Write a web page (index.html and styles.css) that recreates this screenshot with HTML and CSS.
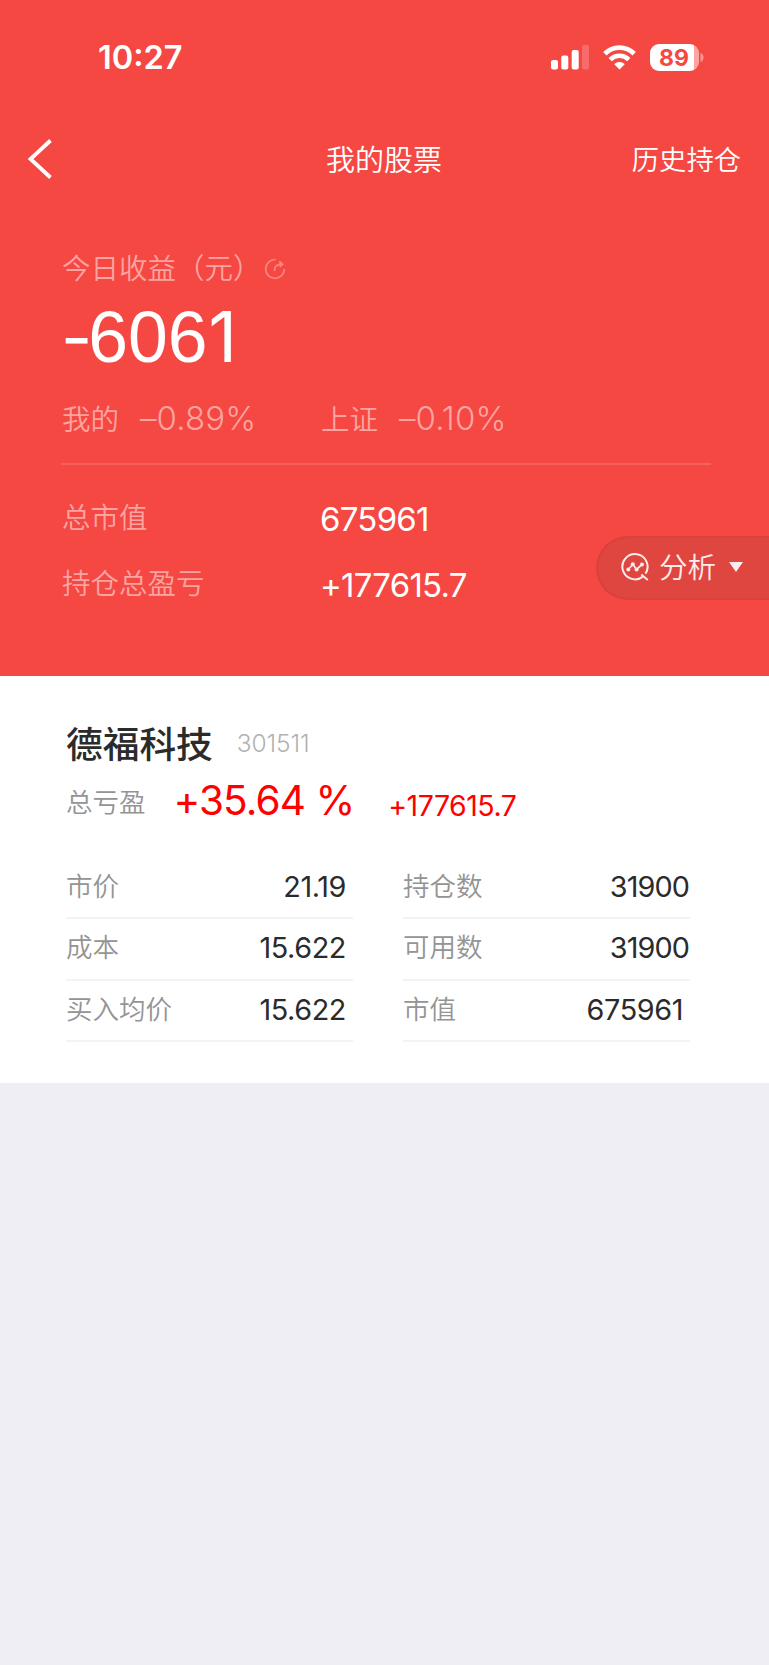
FILE: index.html
```
<!DOCTYPE html>
<html lang="zh-CN">
<head>
  <meta charset="UTF-8">
  <title>我的股票</title>
  <link rel="stylesheet" href="styles.css">
</head>
<body>
  <div class="top">
    <!-- Status bar -->
    <div class="status-bar">
      <span class="time">10:27</span>
      <div class="status-icons">
        <svg class="signal" width="38" height="25" viewBox="0 0 38 25" fill="#fff">
          <rect x="0" y="15" width="7" height="9.5" rx="2"/>
          <rect x="10.3" y="10.5" width="7" height="14" rx="2"/>
          <rect x="20.7" y="5" width="7" height="19.5" rx="2"/>
          <rect x="31" y="0" width="7" height="24.5" rx="2" opacity="0.2"/>
        </svg>
        <svg class="wifi" width="33" height="25" viewBox="0 0 33 25">
          <path d="M1.8 8.8C10 0.6 23 0.6 31.2 8.8" fill="none" stroke="#fff" stroke-width="4.8"/>
          <path d="M7.2 14.6C12.5 9.5 20.5 9.5 25.8 14.6" fill="none" stroke="#fff" stroke-width="4.6"/>
          <path d="M11.3 19.2C14 16.2 19 16.2 21.7 19.2L16.5 24.5Z" fill="#fff"/>
        </svg>
        <div class="battery">
          <span class="battery-level">89</span>
          <svg class="battery-cap" width="4" height="9" viewBox="0 0 4 9"><path d="M0.5 0C4.5 1.5 4.5 7.5 0.5 9Z" fill="#fff" opacity="0.45"/></svg>
        </div>
      </div>
    </div>

    <!-- Nav bar -->
    <div class="nav-bar">
      <svg class="back" width="26" height="42" viewBox="0 0 26 42">
        <path d="M23.5 2.5L3.5 21L23.5 39.5" fill="none" stroke="#fff" stroke-width="3.8"/>
      </svg>
      <span class="nav-title">我的股票</span>
      <span class="nav-link">历史持仓</span>
    </div>

    <!-- Today's profit -->
    <div class="summary">
      <div class="today">
        <span>今日收益（元）</span>
        <svg class="refresh" width="22" height="22" viewBox="0 0 22 22" fill="none" stroke="#fa8581" stroke-width="1.7">
          <path d="M11.5 1.6A9.4 9.4 0 1 0 20.4 11"/>
          <path d="M10.6 13C10.4 8.5 12.5 6.4 18 6.2"/>
          <path d="M15.4 3.4L18.6 6.2L15.8 9" fill="#fa8581"/>
        </svg>
      </div>
      <div class="profit"><span class="minus">-</span>606<span class="one">1</span></div>
      <div class="compare">
        <div class="compare-item"><span class="label">我的</span><span class="rate">–0.89%</span></div>
        <div class="compare-item"><span class="label">上证</span><span class="rate">–0.10%</span></div>
      </div>
      <div class="total-row"><span class="label">总市值</span><span class="total">675961</span></div>
      <div class="total-row"><span class="label">持仓总盈亏</span><span class="total">+177615.7</span></div>
    </div>

    <div class="analyze">
      <svg width="29" height="29" viewBox="0 0 29 29" fill="none" stroke="#fdeceb" stroke-width="2">
        <path d="M21.8 23.6A12.6 12.6 0 1 1 24.4 20.8"/>
        <path d="M20.3 21.5L26.8 27" />
        <path d="M7 16.5L12 11.5L15.5 16.5L21 11.5" stroke-width="1.7"/>
        <g fill="#fdeceb" stroke="none"><circle cx="7.3" cy="16.4" r="2"/><circle cx="11.8" cy="11.3" r="2"/><circle cx="15.6" cy="16.6" r="2"/><circle cx="21" cy="11.5" r="2"/></g>
      </svg>
      <span class="analyze-text">分析</span>
      <span class="arrow"></span>
    </div>
  </div>

  <!-- Stock card -->
  <div class="stock">
    <div class="stock-head">
      <span class="stock-name">德福科技</span>
      <span class="stock-code">301511</span>
    </div>
    <div class="stock-profit">
      <span class="profit-label">总亏盈</span>
      <span class="percent">+35.64 %</span>
      <span class="amount">+177615.7</span>
    </div>
    <div class="details">
      <div class="detail"><span>市价</span><span class="value">21.19</span></div>
      <div class="detail"><span>持仓数</span><span class="value count">31900</span></div>
      <div class="detail"><span>成本</span><span class="value">15.622</span></div>
      <div class="detail"><span>可用数</span><span class="value count">31900</span></div>
      <div class="detail"><span>买入均价</span><span class="value">15.622</span></div>
      <div class="detail"><span>市值</span><span class="value">675961</span></div>
    </div>
  </div>
</body>
</html>
```
FILE: styles.css
```
* {
  box-sizing: border-box;
}

body {
  margin: 0;
  background: #efeef4;
  font-family: Inter, "Noto Sans CJK SC", sans-serif;
  color: #2b2b2b;
}

span {
  white-space: nowrap;
}

.top {
  position: relative;
  height: 676px;
  background: #f54843;
  color: #fff;
}

/* Status bar */
.status-bar {
  display: flex;
  justify-content: space-between;
  height: 118px;
  padding: 37px 65px 0 98px;
}

.time {
  font-size: 32.5px;
  font-weight: 600;
  line-height: 42px;
}

.status-icons {
  display: flex;
  align-items: flex-start;
  padding-top: 8px;
}

.wifi {
  margin-left: 14px;
}

.battery {
  display: flex;
  align-items: center;
  margin: -1px 0 0 14px;
}

.battery-level {
  width: 49px;
  height: 27px;
  padding-right: 1px;
  border-radius: 9px;
  background: linear-gradient(90deg, #fff 44px, #fba4a1 44px);
  color: #f54843;
  font-size: 23px;
  font-weight: 700;
  line-height: 28px;
  text-align: center;
}

.battery-cap {
  margin-left: 1px;
}

/* Nav bar */
.nav-bar {
  display: grid;
  grid-template-columns: 1fr auto 1fr;
  align-items: center;
  height: 82px;
  padding: 0 28px 0 27px;
}

.nav-title {
  padding-bottom: 3px;
  font-size: 29px;
  font-weight: 350;
}

.nav-link {
  justify-self: end;
  padding-bottom: 2px;
  font-size: 27.3px;
  font-weight: 350;
}

/* Summary */
.summary {
  padding: 47px 58px 0 61px;
}

.today {
  display: flex;
  align-items: center;
  height: 42px;
  padding-left: 1px;
  font-size: 28.5px;
  font-weight: 350;
  color: #fba4a1;
}

.today span {
  padding-bottom: 4px;
}

.refresh {
  margin: 2px 0 0 2px;
}

.profit {
  height: 96px;
  font-family: "Liberation Sans", sans-serif;
  font-size: 71.5px;
  line-height: 96px;
}

.minus {
  font-family: Inter, sans-serif;
  font-size: 68px;
  letter-spacing: -4px;
}

.one {
  margin-left: 1px;
  font-family: Inter, sans-serif;
  font-size: 70px;
}

.compare {
  display: flex;
  height: 80px;
  padding-top: 14px;
  border-bottom: 2px solid #f8605b;
}

.compare-item {
  display: flex;
  width: 259px;
  height: 40px;
  color: #fba4a1;
  line-height: 38px;
}

.label {
  padding-left: 1px;
  font-size: 28.5px;
  font-weight: 350;
  color: #fba4a1;
}

.compare .label {
  line-height: 42px;
}

.rate {
  margin-left: 21px;
  font-size: 33px;
  font-weight: 300;
  letter-spacing: 0.1px;
}

.total-row {
  display: grid;
  grid-template-columns: 259px 1fr;
  height: 66px;
  line-height: 40px;
}

.total-row:nth-of-type(4) {
  margin-top: 33px;
}

.total {
  padding-top: 1px;
  font-size: 33px;
  letter-spacing: -0.75px;
}

/* Floating button */
.analyze {
  position: absolute;
  top: 536px;
  right: 0;
  display: flex;
  align-items: center;
  width: 173px;
  height: 64px;
  padding: 0 0 1px 23px;
  border: 2px solid #d9413c;
  border-right: 0;
  border-radius: 32px 0 0 32px;
  background: #df463f;
}

.analyze-text {
  margin-left: 9px;
  padding-bottom: 4px;
  font-size: 28.5px;
  font-weight: 350;
  color: #fdeceb;
}

.arrow {
  margin: -1px 0 0 13px;
  border: 7px solid transparent;
  border-top: 10px solid #fdeceb;
  border-bottom: 0;
}

/* Stock card */
.stock {
  height: 407px;
  padding: 40px 66px 0;
  background: #fff;
}

.stock-head {
  display: flex;
  align-items: center;
  height: 54px;
}

.stock-name {
  padding-bottom: 2px;
  font-size: 36.7px;
  font-weight: 500;
}

.stock-code {
  margin-left: 24px;
  font-size: 24.5px;
  font-weight: 300;
  letter-spacing: -0.1px;
  color: #b2b2b2;
}

.stock-profit {
  display: flex;
  align-items: flex-start;
  height: 88px;
  color: #f00;
}

.profit-label {
  font-size: 26.5px;
  font-weight: 350;
  line-height: 64px;
  color: #949494;
}

.percent {
  margin-left: 28px;
  font-size: 40.5px;
  line-height: 62px;
  letter-spacing: -0.9px;
}

.amount {
  margin-left: 34px;
  font-size: 28.5px;
  line-height: 71px;
  letter-spacing: -0.5px;
}

.details {
  display: grid;
  grid-template-columns: 287px 287px;
  column-gap: 50px;
}

.detail {
  display: flex;
  justify-content: space-between;
  height: 61.3px;
  border-bottom: 2px solid #f3f3f3;
  font-size: 26.5px;
  font-weight: 350;
  line-height: 57px;
  color: #949494;
}

.value {
  padding-right: 7px;
  font-size: 28.8px;
  font-weight: 400;
  line-height: 58px;
  letter-spacing: -0.4px;
  color: #2b2b2b;
}

.count {
  padding-right: 1px;
  letter-spacing: -0.9px;
}
```
